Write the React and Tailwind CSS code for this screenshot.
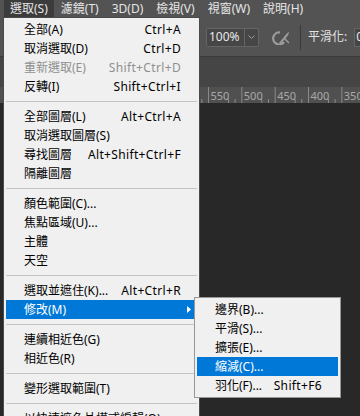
import React from "react";

const font = "font-['Noto_Sans','Noto_Sans_CJK_TC',sans-serif]";

const menuBar = ["選取(S)", "濾鏡(T)", "3D(D)", "檢視(V)", "視窗(W)", "說明(H)"];

// main dropdown: groups split by separators
const groups = [
  [
    { label: "全部(A)", key: "Ctrl+A" },
    { label: "取消選取(D)", key: "Ctrl+D" },
    { label: "重新選取(E)", key: "Shift+Ctrl+D", disabled: true },
    { label: "反轉(I)", key: "Shift+Ctrl+I" },
  ],
  [
    { label: "全部圖層(L)", key: "Alt+Ctrl+A" },
    { label: "取消選取圖層(S)" },
    { label: "尋找圖層", key: "Alt+Shift+Ctrl+F" },
    { label: "隔離圖層" },
  ],
  [
    { label: "顏色範圍(C)..." },
    { label: "焦點區域(U)..." },
    { label: "主體" },
    { label: "天空" },
  ],
  [
    { label: "選取並遮住(K)...", key: "Alt+Ctrl+R" },
    { label: "修改(M)", sub: true, active: true },
  ],
  [{ label: "連續相近色(G)" }, { label: "相近色(R)" }],
  [{ label: "變形選取範圍(T)" }],
  [{ label: "以快速遮色片模式編輯(Q)" }],
];

const subItems = [
  { label: "邊界(B)..." },
  { label: "平滑(S)..." },
  { label: "擴張(E)..." },
  { label: "縮減(C)...", active: true },
  { label: "羽化(F)...", key: "Shift+F6" },
];

function Separator() {
  return (
    <div className="h-[11px] flex items-center ml-[2px] mr-[2px]">
      <div className="h-px w-full bg-[#c4c4c4]" />
    </div>
  );
}

function MenuRow({ item }) {
  return (
    <div
      className={
        "h-[19px] flex items-center justify-between ml-[2px] mr-[5px] pl-[18px] " +
        (item.sub ? "pr-[3px] " : "pr-[13px] ") +
        (item.active ? "bg-[#0078d7] text-white" : item.disabled ? "text-[#8f8f8f]" : "text-black")
      }
    >
      <span className="whitespace-nowrap">{item.label}</span>
      {item.key && <span className="whitespace-nowrap tracking-[0.35px]">{item.key}</span>}
      {item.sub && (
        <svg width="4" height="7" viewBox="0 0 4 7">
          <path d="M0 0 L4 3.5 L0 7 Z" fill="#fff" />
        </svg>
      )}
    </div>
  );
}

function Ruler() {
  const majors = [0, 1, 2, 3, 4];
  const step = 33.33;
  return (
    <svg width="360" height="16" className="block">
      {majors.map((n) => {
        const x = 208.5 + n * step;
        return (
          <g key={n}>
            <line x1={x - 6.7} y1="12" x2={x - 6.7} y2="16" stroke="#8a8a8a" strokeWidth="1" />
            <line x1={x} y1="0" x2={x} y2="16" stroke="#8a8a8a" strokeWidth="1" />
            <line x1={x + 20} y1="12" x2={x + 20} y2="16" stroke="#8a8a8a" strokeWidth="1" />
            <text x={x + 2} y="13" fontSize="11" fill="#a8a8a8" fontFamily="Noto Sans, sans-serif">
              {550 - n * 50}
            </text>
          </g>
        );
      })}
    </svg>
  );
}

export default function App() {
  return (
    <div className={"relative w-[360px] h-[416px] overflow-hidden bg-[#282828] flex flex-col text-[12px] leading-none " + font}>
      {/* menu bar */}
      <div className="h-[18px] shrink-0 bg-[#535353] flex items-stretch pl-[4px] gap-[1px] text-[#e6e6e6]">
        {menuBar.map((m, i) => (
          <div
            key={m}
            className={"flex items-center px-[6px] whitespace-nowrap " + (i === 0 ? "bg-[#3c3c3c]" : "")}
          >
            {m}
          </div>
        ))}
      </div>

      {/* options bar */}
      <div className="h-[39px] shrink-0 bg-[#535353] border-b border-[#3a3a3a] flex items-center pl-[206px] overflow-hidden">
        <div className="h-[19px] w-[53px] shrink-0 flex items-stretch border border-[#656565] bg-[#464646] rounded-[2px]">
          <div className="flex-1 flex items-center pl-[2px] text-[#e8e8e8]">100%</div>
          <div className="w-[14px] border-l border-[#656565] flex items-center justify-center">
            <svg width="7" height="4" viewBox="0 0 7 4">
              <path d="M0.5 0.5 L3.5 3.5 L6.5 0.5" fill="none" stroke="#a0a0a0" strokeWidth="1" />
            </svg>
          </div>
        </div>
        <svg width="19" height="15" viewBox="0 0 19 15" className="ml-[12px] shrink-0">
          <path d="M9 2.5 A6 6 0 1 0 13 12" fill="none" stroke="#9c9c9c" strokeWidth="2.2" />
          <path d="M8 13 L15 4.5 L17.5 2 L18 3 L16.5 6 L10 13.5 Z" fill="#9c9c9c" />
          <path d="M13 8 L18 13" stroke="#9c9c9c" strokeWidth="1.5" />
        </svg>
        <div className="ml-[10px] w-px h-[25px] shrink-0 bg-[#3a3a3a]" />
        <span className="ml-[7px] shrink-0 text-[#e2e2e2] whitespace-nowrap">平滑化:</span>
        <div className="ml-[7px] h-[19px] w-[40px] shrink-0 border border-[#656565] bg-[#464646] flex items-center pl-[1px] text-[#e8e8e8]">
          0
        </div>
      </div>

      {/* document tab strip */}
      <div className="h-[30px] shrink-0 bg-[#454545]" />

      {/* ruler */}
      <div className="h-[16px] shrink-0 bg-[#505050]">
        <Ruler />
      </div>

      {/* canvas */}
      <div className="flex-1 bg-[#282828]" />

      {/* select menu dropdown */}
      <div className="absolute left-[3px] top-[17px] w-[197px] h-[420px] bg-[#f0f0f0] border-x border-t border-[#4a4a4a] pt-[2px]">
        {groups.map((g, gi) => (
          <React.Fragment key={gi}>
            {gi > 0 && <Separator />}
            {g.map((item) => (
              <MenuRow key={item.label} item={item} />
            ))}
          </React.Fragment>
        ))}
      </div>

      {/* modify submenu */}
      <div className="absolute left-[194px] top-[297px] w-[147px] bg-[#f0f0f0] border border-[#979797] py-[2px]">
        {subItems.map((item) => (
          <div
            key={item.label}
            className={
              "h-[19px] mx-[2px] pl-[18px] pr-[16px] flex items-center justify-between " +
              (item.active ? "bg-[#0078d7] text-white" : "text-black")
            }
          >
            <span className="whitespace-nowrap">{item.label}</span>
            {item.key && <span className="whitespace-nowrap tracking-[0.35px]">{item.key}</span>}
          </div>
        ))}
      </div>
    </div>
  );
}
